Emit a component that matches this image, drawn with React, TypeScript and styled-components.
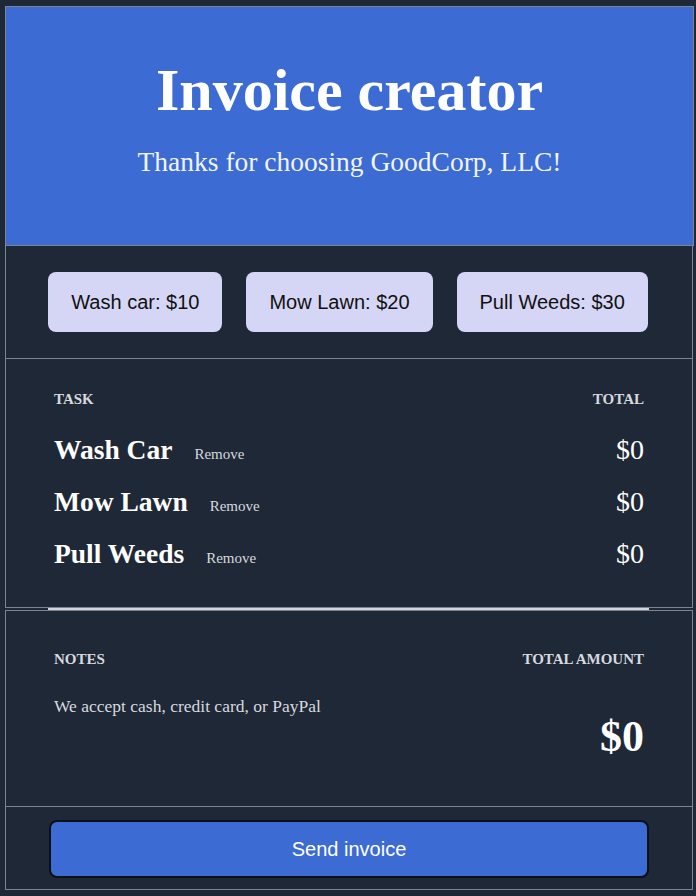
import React from "react";
import styled, { createGlobalStyle } from "styled-components";

const GlobalStyle = createGlobalStyle`
  html, body {
    background: #1f2836;
  }
  body {
    margin: 6px 0 0 5px;
    font-family: "Liberation Serif", "Times New Roman", serif;
    color: #ffffff;
  }
`;

const Page = styled.div`
  width: 689px;
  display: flex;
  flex-direction: column;
`;

const Header = styled.header`
  box-sizing: border-box;
  height: 240px;
  background: #3b6bd3;
  border: 1px solid #7b8494;
  text-align: center;
  padding-top: 48px;
`;

const Title = styled.h1`
  margin: 0;
  font-size: 60px;
  font-weight: 700;
  line-height: 70px;
`;

const Subtitle = styled.p`
  margin: 20px 0 0;
  font-size: 27.5px;
  line-height: 34px;
  color: #f2f4fb;
`;

const Section = styled.section<{ $height: number; $top?: boolean }>`
  box-sizing: border-box;
  width: 688px;
  height: ${(p) => p.$height}px;
  border: 1px solid #7b8494;
  border-top: ${(p) => (p.$top ? "1px solid #7b8494" : "none")};
`;

const ChoreRow = styled.div`
  display: flex;
  justify-content: center;
  gap: 24px;
  padding-top: 26px;
  margin-left: -2px;
`;

const ChoreButton = styled.button`
  height: 60px;
  padding: 0 23px;
  border: none;
  border-radius: 8px;
  background: #d5d6f5;
  color: #111111;
  font-family: "Liberation Sans", Arial, sans-serif;
  font-size: 20px;
`;

const Inner = styled.div<{ $top: number }>`
  padding: ${(p) => p.$top}px 48px 0 48px;
`;

const LabelRow = styled.div`
  display: flex;
  justify-content: space-between;
`;

const Label = styled.span`
  font-size: 15px;
  font-weight: 700;
  color: #d6d9df;
  line-height: 16px;
`;

const TaskList = styled.div`
  margin-top: 25px;
`;

const TaskRow = styled.div`
  display: flex;
  align-items: baseline;
  justify-content: space-between;
  height: 52px;
`;

const TaskName = styled.span`
  font-size: 27.5px;
  font-weight: 700;
  line-height: 36px;
`;

const RemoveLink = styled.span`
  margin-left: 22px;
  font-size: 15px;
  color: #d6d9df;
`;

const Price = styled.span`
  font-size: 28px;
  line-height: 36px;
`;

const Divider = styled.div`
  height: 2px;
  margin-left: 43px;
  width: 601px;
  background: #d1d5db;
`;

const NotesBody = styled.div`
  display: flex;
  justify-content: space-between;
  margin-top: 29px;
`;

const NoteText = styled.p`
  margin: 0;
  font-size: 17.5px;
  color: #d6d9df;
  line-height: 20px;
`;

const GrandTotal = styled.span`
  margin-top: 16px;
  font-size: 44px;
  font-weight: 700;
  line-height: 50px;
`;

const Footer = styled.div`
  padding: 13px 0 0 43px;
`;

const SendButton = styled.button`
  box-sizing: border-box;
  width: 600px;
  height: 58px;
  border: 2px solid #0b0f17;
  border-radius: 8px;
  background: #3b6bd3;
  color: #ffffff;
  font-family: "Liberation Sans", Arial, sans-serif;
  font-size: 20px;
`;

const chores = [
  { label: "Wash car: $10", name: "Wash Car" },
  { label: "Mow Lawn: $20", name: "Mow Lawn" },
  { label: "Pull Weeds: $30", name: "Pull Weeds" },
];

export default function App() {
  return (
    <>
      <GlobalStyle />
      <Page>
        <Header>
          <Title>Invoice creator</Title>
          <Subtitle>Thanks for choosing GoodCorp, LLC!</Subtitle>
        </Header>
        <Section $height={113}>
          <ChoreRow>
            {chores.map((c) => (
              <ChoreButton key={c.label}>{c.label}</ChoreButton>
            ))}
          </ChoreRow>
        </Section>
        <Section $height={249}>
          <Inner $top={32}>
            <LabelRow>
              <Label>TASK</Label>
              <Label>TOTAL</Label>
            </LabelRow>
            <TaskList>
              {chores.map((c) => (
                <TaskRow key={c.name}>
                  <span>
                    <TaskName>{c.name}</TaskName>
                    <RemoveLink>Remove</RemoveLink>
                  </span>
                  <Price>$0</Price>
                </TaskRow>
              ))}
            </TaskList>
          </Inner>
        </Section>
        <Divider />
        <Section $height={197} $top>
          <Inner $top={40}>
            <LabelRow>
              <Label>NOTES</Label>
              <Label>TOTAL AMOUNT</Label>
            </LabelRow>
            <NotesBody>
              <NoteText>We accept cash, credit card, or PayPal</NoteText>
              <GrandTotal>$0</GrandTotal>
            </NotesBody>
          </Inner>
        </Section>
        <Section $height={83}>
          <Footer>
            <SendButton>Send invoice</SendButton>
          </Footer>
        </Section>
      </Page>
    </>
  );
}
